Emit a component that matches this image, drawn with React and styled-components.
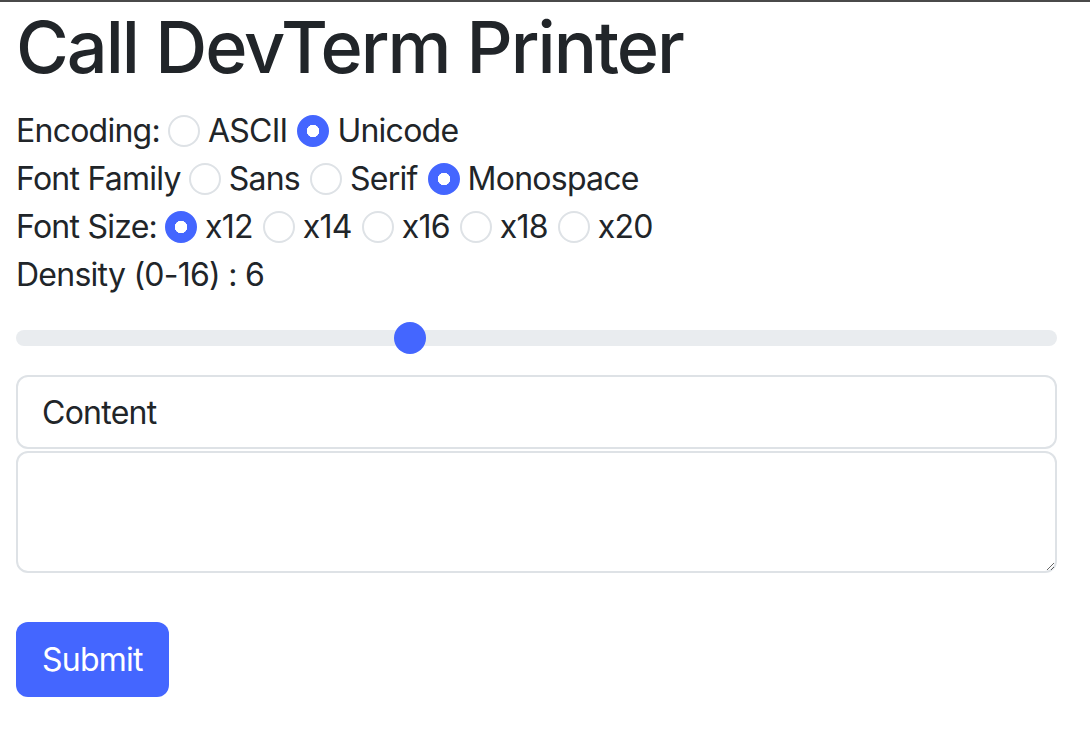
import React, { useState } from "react";
import styled, { createGlobalStyle } from "styled-components";

const GlobalStyle = createGlobalStyle`
  * {
    box-sizing: border-box;
  }
  body {
    margin: 0;
    background: #ffffff;
    color: #212529;
    font-family: Inter, "Liberation Sans", Arial, sans-serif;
    font-size: 32px;
    line-height: 1.5;
    letter-spacing: -0.75px;
  }
`;

const Page = styled.div`
  border-top: 2px solid #4a4a4a;
  padding: 0 33px 40px 16px;
`;

const Title = styled.h1`
  margin: 0 0 15px;
  font-size: 72px;
  font-weight: 500;
  line-height: 90px;
  letter-spacing: -2px;
`;

const Row = styled.div`
  display: flex;
  align-items: center;
  gap: 8px;
  height: 48px;
`;

const Label = styled.span`
  margin-right: 0;
`;

const Radio = styled.input.attrs({ type: "radio" })`
  appearance: none;
  width: 32px;
  height: 32px;
  margin: 0;
  border: 2px solid #dee2e6;
  border-radius: 50%;
  background: #ffffff;
  flex-shrink: 0;
  cursor: pointer;
  &:checked {
    border-color: #4466ff;
    background: radial-gradient(circle, #ffffff 0 6px, #4466ff 6.5px);
  }
`;

const Option = styled.label`
  display: flex;
  align-items: center;
  gap: 8px;
  margin-right: 2px;
  cursor: pointer;
`;

const Range = styled.input.attrs({ type: "range" })`
  display: block;
  width: 100%;
  height: 48px;
  margin: 15px 0 13px;
  padding: 0;
  appearance: none;
  background: transparent;
  &::-webkit-slider-runnable-track {
    height: 16px;
    border-radius: 16px;
    background: #e9ecef;
  }
  &::-webkit-slider-thumb {
    appearance: none;
    width: 32px;
    height: 32px;
    margin-top: -8px;
    border: 0;
    border-radius: 50%;
    background: #4466ff;
  }
`;

const Field = styled.input`
  display: block;
  width: 100%;
  height: 74px;
  margin: 0 0 2px;
  padding: 0 24px;
  border: 2px solid #dee2e6;
  border-radius: 12px;
  font: inherit;
  letter-spacing: inherit;
  color: #212529;
  outline: none;
`;

const Area = styled.textarea`
  display: block;
  width: 100%;
  height: 122px;
  margin: 0;
  padding: 12px 24px;
  border: 2px solid #dee2e6;
  border-radius: 12px;
  font: inherit;
  letter-spacing: inherit;
  color: #212529;
  outline: none;
`;

const Submit = styled.button`
  display: block;
  margin-top: 49px;
  height: 75px;
  padding: 0 26px;
  border: 0;
  border-radius: 12px;
  background: #4466ff;
  color: #ffffff;
  font: inherit;
  letter-spacing: inherit;
  cursor: pointer;
`;

function Group({ label, name, options, value, onChange }) {
  return (
    <Row>
      <Label>{label}</Label>
      {options.map((o) => (
        <Option key={o}>
          <Radio name={name} checked={value === o} onChange={() => onChange(o)} />
          {o}
        </Option>
      ))}
    </Row>
  );
}

export default function App() {
  const [encoding, setEncoding] = useState("Unicode");
  const [family, setFamily] = useState("Monospace");
  const [size, setSize] = useState("x12");
  const [density, setDensity] = useState(6);
  const [content, setContent] = useState("Content");
  const [text, setText] = useState("");

  return (
    <Page>
      <GlobalStyle />
      <Title>Call DevTerm Printer</Title>
      <Group
        label="Encoding:"
        name="encoding"
        options={["ASCII", "Unicode"]}
        value={encoding}
        onChange={setEncoding}
      />
      <Group
        label="Font Family"
        name="family"
        options={["Sans", "Serif", "Monospace"]}
        value={family}
        onChange={setFamily}
      />
      <Group
        label="Font Size:"
        name="size"
        options={["x12", "x14", "x16", "x18", "x20"]}
        value={size}
        onChange={setSize}
      />
      <Row>Density (0-16) : {density}</Row>
      <Range
        min={0}
        max={16}
        value={density}
        onChange={(e) => setDensity(Number(e.target.value))}
      />
      <Field value={content} onChange={(e) => setContent(e.target.value)} />
      <Area rows={2} value={text} onChange={(e) => setText(e.target.value)} />
      <Submit>Submit</Submit>
    </Page>
  );
}
